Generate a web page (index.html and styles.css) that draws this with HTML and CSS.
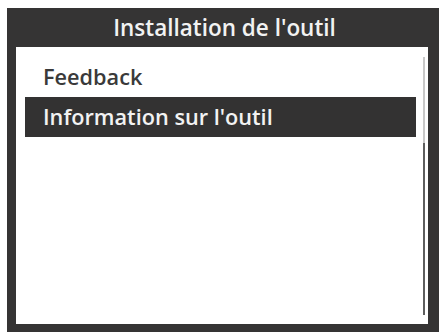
FILE: index.html
```html
<!DOCTYPE html>
<html>
<head>
<meta charset="utf-8">
<link rel="stylesheet" href="styles.css">
</head>
<body>
<div class="device">
  <div class="title">Installation de l'outil</div>
  <div class="screen">
    <ul class="list">
      <li class="row">Feedback</li>
      <li class="row selected">Information sur l'outil</li>
    </ul>
    <div class="scrollbar">
      <div class="track"></div>
      <div class="thumb"></div>
    </div>
  </div>
</div>
</body>
</html>
```
FILE: styles.css
```css
html, body {
  margin: 0;
  padding: 0;
  background: #ffffff;
}
body {
  font-family: "Open Sans", "Liberation Sans", sans-serif;
}
.device {
  margin: 8px 0 0 7px;
  width: 432px;
  height: 324px;
  box-sizing: border-box;
  background: #353434;
  padding: 0 11px 8px 9px;
  display: flex;
  flex-direction: column;
}
.title {
  height: 39px;
  flex: none;
  color: #f2f2f2;
  font-size: 22.5px;
  font-weight: 600;
  text-align: center;
  line-height: 39px;
  padding-left: 5px;
}
.screen {
  flex: 1;
  background: #ffffff;
  display: flex;
  padding: 10px 3px 9px 9px;
}
.list {
  list-style: none;
  margin: 0 7px 0 0;
  padding: 0;
  flex: 1;
}
.row {
  height: 40px;
  line-height: 40px;
  padding-left: 18px;
  font-size: 21.7px;
  font-weight: 600;
  color: #3a3a3a;
}
.row.selected {
  background: #333232;
  color: #f2f2f2;
}
.scrollbar {
  width: 2px;
  display: flex;
  flex-direction: column;
}
.track {
  height: 86px;
  background: #c8c8c8;
}
.thumb {
  flex: 1;
  background: #5e5e5e;
}
```
